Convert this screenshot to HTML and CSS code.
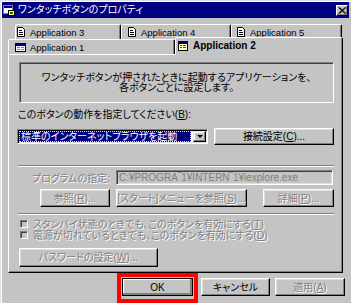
FILE: index.html
```html
<!DOCTYPE html>
<html lang="ja">
<head>
  <meta charset="UTF-8" />
  <title>ワンタッチボタンのプロパティ</title>
  <link rel="stylesheet" href="styles.css">
</head>
<body>

  <div class="window">
    <!-- Title bar -->
    <div class="titlebar">
      <svg class="app-icon" width="12" height="12" viewBox="0 0 12 12">
        <rect x="0.5" y="1.5" width="9" height="8" fill="#fff" stroke="#808080"/>
        <rect x="1" y="2" width="8" height="2" fill="#000080"/>
        <rect x="5.5" y="6.5" width="6" height="5" fill="#ffff80" stroke="#000"/>
        <rect x="7" y="8" width="3" height="2" fill="#008000"/>
      </svg>
      <span class="title">ワンタッチボタンのプロパティ</span>
      <span class="close">
        <svg width="8" height="7" viewBox="0 0 8 7">
          <path d="M0.5 0.5L7 6.5M1.5 0.5L8 6.5M7 0.5L0.5 6.5M8 0.5L1.5 6.5" stroke="#000" stroke-width="1"/>
        </svg>
      </span>
    </div>

    <!-- Tabs -->
    <div class="tabs">
      <div class="tabrow back">
        <div class="tab t3">
          <svg class="doc" width="8" height="10" viewBox="0 0 8 10">
            <path d="M0.5 0.5h5l2 2v7h-7z" fill="#fff" stroke="#000"/>
            <path d="M2 3.5h3M2 5.5h4M2 7.5h4" stroke="#000"/>
          </svg>
          Application 3
        </div>
        <div class="tab t4">
          <svg class="doc" width="8" height="10" viewBox="0 0 8 10">
            <path d="M0.5 0.5h5l2 2v7h-7z" fill="#fff" stroke="#000"/>
            <path d="M2 3.5h3M2 5.5h4M2 7.5h4" stroke="#000"/>
          </svg>
          Application 4
        </div>
        <div class="tab t5">
          <svg class="doc" width="8" height="10" viewBox="0 0 8 10">
            <path d="M0.5 0.5h5l2 2v7h-7z" fill="#fff" stroke="#000"/>
            <path d="M2 3.5h3M2 5.5h4M2 7.5h4" stroke="#000"/>
          </svg>
          Application 5
        </div>
      </div>
      <div class="tabrow front">
        <div class="tab t1">
          <svg class="win" width="11" height="9" viewBox="0 0 11 9">
            <rect x="0.5" y="0.5" width="10" height="8" fill="#fff" stroke="#000"/>
            <rect x="1" y="1" width="9" height="2" fill="#000080"/>
            <path d="M2 4.5h3M2 6.5h3M6 4.5h3M6 6.5h3" stroke="#808080"/>
          </svg>
          Application 1
        </div>
        <div class="tab t2 active">
          <svg class="win" width="10" height="10" viewBox="0 0 10 10">
            <rect x="0.5" y="0.5" width="9" height="9" fill="#ffffc0" stroke="#000"/>
            <rect x="1" y="1" width="8" height="2" fill="#000080"/>
            <path d="M2 4.5h2M2 6.5h2M5 4.5h3M5 6.5h3" stroke="#008000"/>
          </svg>
          Application 2
        </div>
      </div>
    </div>

    <!-- Tab page -->
    <div class="panel">
      <div class="info">
        <span>ワンタッチボタンが押されたときに起動するアプリケーションを、</span>
        <span>各ボタンごとに設定します。</span>
      </div>

      <div class="label">このボタンの動作を指定してください(<u>B</u>):</div>

      <div class="combo-row">
        <div class="combo">
          <span class="combo-value">標準のインターネットブラウザを起動</span>
          <span class="drop"><span class="arrow"></span></span>
        </div>
        <div class="btn connect">接続設定(<u>C</u>)...</div>
      </div>

      <div class="sep"></div>

      <div class="program-row">
        <span class="prog-label disabled">プログラムの指定:</span>
        <div class="field">C:¥PROGRA‾1¥INTERN‾1¥iexplore.exe</div>
      </div>

      <div class="button-row">
        <div class="btn disabled browse">参照(<u>R</u>)...</div>
        <div class="btn disabled start-menu">[スタート]メニューを参照(<u>S</u>)...</div>
        <div class="btn disabled details">詳細(<u>P</u>)...</div>
      </div>

      <div class="sep sep-2"></div>

      <div class="check-row">
        <span class="checkbox"></span>
        <span class="disabled">スタンバイ状態のときでも、このボタンを有効にする(<u>T</u>)</span>
      </div>
      <div class="check-row">
        <span class="checkbox"></span>
        <span class="disabled">電源が切れているときでも、このボタンを有効にする(<u>D</u>)</span>
      </div>

      <div class="btn disabled password">パスワードの設定(<u>W</u>)...</div>
    </div>

    <!-- Dialog buttons -->
    <div class="footer">
      <div class="mark">
        <div class="btn default ok">OK</div>
      </div>
      <div class="btn cancel">キャンセル</div>
      <div class="btn disabled apply">適用(<u>A</u>)</div>
    </div>
  </div>

</body>
</html>
```

FILE: styles.css
```css
:root {
  --face: #c4c4c4;
  --shadow: #808080;
  --light: #dfdfdf;
  --navy: #000080;
}

* {
  box-sizing: border-box;
  margin: 0;
  padding: 0;
}

body {
  width: 351px;
  height: 303px;
  overflow: hidden;
  background: var(--face);
  color: #000;
  font-family: "Liberation Sans", "Noto Sans CJK JP", sans-serif;
  font-size: 10px;
  font-feature-settings: "palt";
}

.window {
  width: 351px;
  height: 303px;
  background: var(--face);
  border-top: 1px solid var(--light);
  border-left: 1px solid var(--light);
  box-shadow: inset 1px 1px #fff;
  padding: 1px 2px 0 1px;
}

/* Title bar */
.titlebar {
  height: 16px;
  background: var(--navy);
  color: #fff;
  display: flex;
  align-items: center;
  padding: 0 1px 0 1px;
}

.app-icon {
  flex: none;
}

.title {
  margin-left: 3px;
  font-size: 10px;
  line-height: 16px;
  white-space: nowrap;
}

.close {
  margin-left: auto;
  width: 12px;
  height: 11px;
  background: var(--face);
  border: 1px solid;
  border-color: #fff #000 #000 #fff;
  box-shadow: inset -1px -1px var(--shadow);
  display: flex;
  align-items: center;
  justify-content: center;
}

/* Tabs */
.tabs {
  margin-top: 6px;
}

.tabrow {
  display: flex;
  height: 15px;
}

.tabrow.back {
  margin-left: 13px;
}

.tabrow.front {
  margin-left: 6px;
}

.tab {
  display: flex;
  align-items: center;
  height: 15px;
  border: 1px solid;
  border-bottom: none;
  border-color: #fff #000 transparent #fff;
  border-radius: 2px 2px 0 0;
  box-shadow: inset -1px 0 var(--shadow);
  background: var(--face);
  font-size: 9.5px;
  white-space: nowrap;
}

.tab svg {
  flex: none;
  margin-right: 5px;
}

.t3 { width: 106px; padding-left: 1px; }
.t4 { width: 110px; padding-left: 6px; }
.t5 { width: 111px; padding-left: 5px; }
.t1 { width: 167px; padding-left: 6px; }
.t1 svg { margin-right: 4px; }

.tab.active {
  position: relative;
  z-index: 1;
  width: 168px;
  height: 18px;
  margin-top: -2px;
  padding: 0 0 2px 2px;
  font-weight: bold;
  font-size: 10px;
}

.tab.active svg {
  margin-right: 5px;
}

/* Tab page */
.panel {
  margin-left: 6px;
  width: 335px;
  height: 219px;
  border: 1px solid;
  border-color: #fff #000 #000 #fff;
  box-shadow: inset -1px -1px var(--shadow);
  padding-left: 9px;
}

.info {
  margin: 7px 0 0 1px;
  width: 315px;
  height: 41px;
  border: 1px solid;
  border-color: var(--shadow) #fff #fff var(--shadow);
  box-shadow: inset 1px 1px #404040;
  display: flex;
  flex-direction: column;
  justify-content: center;
  align-items: center;
  line-height: 10px;
}

.label {
  margin-top: 6px;
  line-height: 11px;
  height: 11px;
}

.combo-row {
  margin-top: 8px;
  height: 17px;
  display: flex;
  align-items: center;
}

.combo {
  margin-left: -1px;
  width: 191px;
  height: 15px;
  background: #fff;
  border: 1px solid;
  border-color: var(--shadow) #fff #fff var(--shadow);
  box-shadow: inset 1px 1px #000, inset -1px -1px var(--light);
  padding: 1px 1px 1px 1px;
  display: flex;
  align-items: center;
}

.combo-value {
  width: 172px;
  height: 11px;
  background: var(--navy);
  color: #fff;
  border: 1px dotted #ffff00;
  line-height: 9px;
  padding-left: 1px;
  white-space: nowrap;
  overflow: hidden;
}

.drop {
  margin-left: 2px;
  width: 13px;
  height: 11px;
  background: var(--face);
  border: 1px solid;
  border-color: var(--light) #000 #000 var(--light);
  box-shadow: inset -1px -1px var(--shadow), inset 1px 1px #fff;
  display: flex;
  align-items: center;
  justify-content: center;
}

.arrow {
  width: 0;
  height: 0;
  border-left: 3px solid transparent;
  border-right: 3px solid transparent;
  border-top: 3px solid #000;
}

/* Buttons */
.btn {
  display: flex;
  align-items: center;
  justify-content: center;
  height: 18px;
  background: var(--face);
  border: 1px solid;
  border-color: #fff #000 #000 #fff;
  box-shadow: inset -1px -1px var(--shadow), inset 1px 1px var(--light);
  white-space: nowrap;
  line-height: 11px;
}

.disabled {
  color: var(--shadow);
  text-shadow: 1px 1px #fff;
}

.connect {
  margin-left: 6px;
  width: 120px;
  height: 17px;
}

.sep {
  margin-top: 20px;
  width: 316px;
  height: 2px;
  border-top: 1px solid var(--shadow);
  border-bottom: 1px solid #fff;
}

.sep-2 {
  margin-top: 6px;
}

.program-row {
  margin-top: 3px;
  height: 15px;
  display: flex;
  align-items: center;
}

.prog-label {
  width: 92px;
  text-align: right;
  white-space: nowrap;
}

.field {
  margin-left: 6px;
  width: 217px;
  height: 15px;
  border: 1px solid;
  border-color: var(--shadow) #fff #fff var(--shadow);
  box-shadow: inset 1px 1px #404040, inset -1px -1px var(--light);
  color: var(--shadow);
  padding-left: 2px;
  line-height: 13px;
  white-space: nowrap;
  overflow: hidden;
}

.button-row {
  margin: 4px 0 0 22px;
  display: flex;
}

.browse { width: 70px; }
.start-menu { width: 131px; margin-left: 6px; }
.details { width: 71px; margin-left: 16px; }

.check-row {
  height: 11px;
  display: flex;
  align-items: center;
  white-space: nowrap;
}

.sep-2 + .check-row {
  margin-top: 3px;
}

.checkbox {
  margin-left: 2px;
  margin-right: 5px;
  width: 8px;
  height: 8px;
  border: 1px solid;
  border-color: var(--shadow) #fff #fff var(--shadow);
  box-shadow: inset 1px 1px #404040;
  background: var(--face);
}

.password {
  margin: 8px 0 0 1px;
  width: 139px;
  height: 19px;
}

/* Dialog buttons */
.footer {
  margin-left: 115px;
  display: flex;
  align-items: flex-start;
}

.mark {
  border: 4px solid #ff0000;
  padding: 1px 1px 3px;
}

.ok {
  width: 71px;
  outline: 1px solid #000;
  outline-offset: -1px;
  border-color: #fff #000 #000 #fff;
  box-shadow: inset -2px -2px var(--shadow), inset 1px 1px #fff;
}

.cancel {
  margin: 5px 0 0 3px;
  width: 69px;
}

.apply {
  margin: 5px 0 0 5px;
  width: 70px;
}
```
